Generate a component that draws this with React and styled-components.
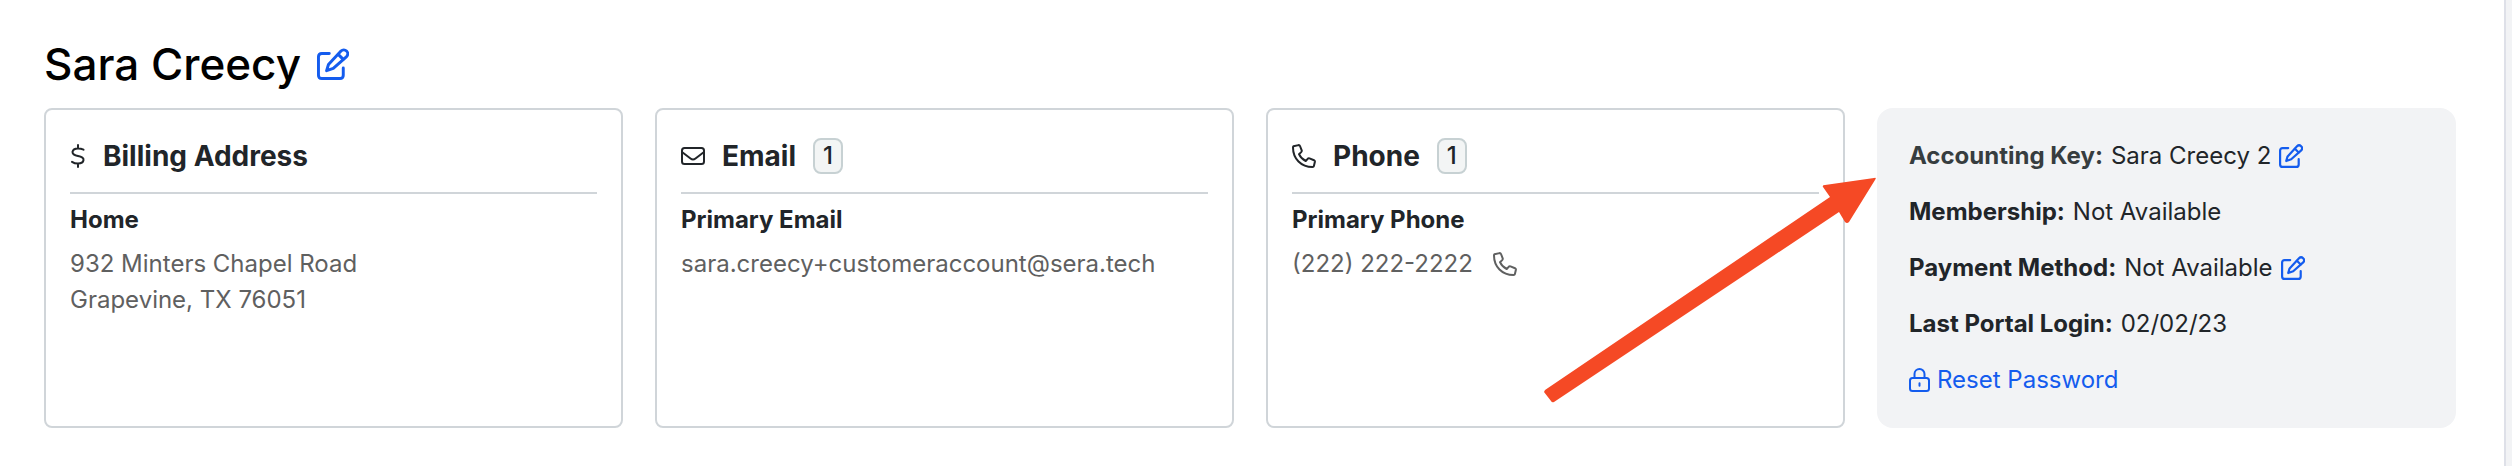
import React from "react";
import styled, { createGlobalStyle } from "styled-components";

const GlobalStyle = createGlobalStyle`
  * {
    box-sizing: border-box;
  }
  body {
    margin: 0;
    background-color: #fff;
    color: #212529;
    font-family: Inter, "Liberation Sans", sans-serif;
    font-size: 24px;
    line-height: 36px;
  }
  h1, h2, h3, p {
    margin: 0;
  }
`;

const PageStyle = styled.div`
  display: flex;
  min-height: 100vh;
`;

const Main = styled.main`
  flex: 1;
  padding: 36px 48px 38px 44px;
`;

const SideRail = styled.div`
  width: 8px;
  border-left: 2px solid #dee0e8;
  background-color: #f2f3f5;
`;

const TitleRow = styled.div`
  display: flex;
  align-items: center;
  gap: 16px;
  margin-bottom: 16px;
`;

const Title = styled.h1`
  color: #000;
  font-size: 44px;
  font-weight: 500;
  line-height: 56px;
`;

const IconButton = styled.button`
  display: inline-flex;
  padding: 0;
  border: 0;
  background: none;
  color: #145cee;
  cursor: pointer;
`;

const CardGrid = styled.div`
  display: grid;
  grid-template-columns: repeat(4, minmax(0, 1fr));
  gap: 32px;
`;

const Card = styled.section`
  position: relative;
  min-height: 320px;
  padding: 24px;
  border: 2px solid #d0d5d9;
  border-radius: 8px;
`;

const CardHeader = styled.header`
  display: flex;
  align-items: center;
  gap: 17px;
  height: 60px;
  margin-bottom: 8px;
  padding-bottom: 14px;
  border-bottom: 2px solid #d0d5d9;
`;

const CardTitle = styled.h2`
  font-size: 28px;
  font-weight: 700;
`;

const Count = styled.span`
  padding: 0 8px;
  border: 2px solid #c7d1d3;
  border-radius: 8px;
  background-color: #f3f5f5;
  font-weight: 500;
  line-height: 32px;
`;

const Label = styled.h3`
  margin-bottom: 8px;
  font-size: 24px;
  font-weight: 700;
`;

const Value = styled.p`
  display: flex;
  align-items: center;
  gap: 20px;
  color: #5f6060;
`;

const Summary = styled.section`
  display: flex;
  flex-direction: column;
  gap: 20px;
  padding: 30px 32px;
  border-radius: 16px;
  background-color: #f2f3f5;
`;

const SummaryRow = styled.p`
  display: flex;
  align-items: center;
  gap: 8px;
`;

const SummaryLabel = styled.strong`
  color: ${({ $muted }) => ($muted ? "#373d3f" : "#212529")};
  font-weight: 700;
`;

const ResetLink = styled.a`
  display: inline-flex;
  align-items: center;
  gap: 6px;
  color: #145cee;
  text-decoration: none;
`;

const Arrow = styled.svg`
  position: absolute;
  right: -34px;
  bottom: 22px;
  width: 334px;
  height: 228px;
  pointer-events: none;
`;

function EditIcon({ size }) {
  return (
    <svg
      width={size}
      height={size}
      viewBox='0 0 24 24'
      fill='none'
      stroke='currentColor'
      strokeWidth='2.2'
      strokeLinecap='round'
      strokeLinejoin='round'
    >
      <path d='M9.200 4.100H3.600Q1.100 4.100 1.100 6.600V20.400Q1.100 22.900 3.600 22.900H17.200Q19.700 22.900 19.700 20.400V15' />
      <path d='M7.200 17L8.600 12.400L18 2.300A2.900 2.900 0 0 1 22.200 6.400L12.200 15.300Z' />
      <path d='M15.900 4.800L19.700 8.500' />
    </svg>
  );
}

function PhoneIcon() {
  return (
    <svg width='24' height='24' viewBox='0 0 24 24' fill='none' stroke='currentColor' strokeWidth='2' strokeLinejoin='round'>
      <path d='M1.500 2.300L6.500 1.100Q7.600 1 8 2L9.700 6.300Q10 7.300 9.200 8.100L7 10.200Q9 14.800 13.700 17L15.700 14.800Q16.500 14 17.500 14.400L22 16.200Q23.100 16.700 22.900 17.800L21.900 22Q21.700 23 20.500 23Q12 23 6.500 17.500Q1 12 1 3.500Q1 2.500 1.500 2.300Z' />
    </svg>
  );
}

function DollarIcon() {
  return (
    <svg width='16' height='24' viewBox='0 0 16 24' fill='none' stroke='currentColor' strokeWidth='2' strokeLinecap='round'>
      <path d='M8 1V4.500M8 19.500V23M13.500 5.700Q11 4.500 8 4.500Q3 4.500 2.500 8Q2.500 11 8 12Q14 13 13.500 16Q13 19.500 8 19.500Q4.500 19.500 2 17.800' />
    </svg>
  );
}

function MailIcon() {
  return (
    <svg width='24' height='24' viewBox='0 0 24 24' fill='none' stroke='currentColor' strokeWidth='2' strokeLinejoin='round'>
      <rect x='1' y='4' width='22' height='16' rx='2.500' />
      <path d='M1 8L9.500 14.500Q12 16.500 14.500 14.500L23 8' />
    </svg>
  );
}

function LockIcon() {
  return (
    <svg width='22' height='24' viewBox='0 0 22 24' fill='none' stroke='currentColor' strokeWidth='2' strokeLinecap='round'>
      <rect x='1' y='10' width='19' height='13' rx='2.500' />
      <path d='M5.500 10V6A5 5 0 0 1 15.500 6V10M10.500 15.300V17.700' />
    </svg>
  );
}

function ContactCard({ icon, title, count, label, children }) {
  return (
    <Card>
      <CardHeader>
        {icon}
        <CardTitle>{title}</CardTitle>
        {count && <Count>{count}</Count>}
      </CardHeader>
      <Label>{label}</Label>
      {children}
    </Card>
  );
}

export default function App() {
  return (
    <PageStyle>
      <GlobalStyle />
      <Main>
        <TitleRow>
          <Title>Sara Creecy</Title>
          <IconButton aria-label='Edit name'>
            <EditIcon size={32} />
          </IconButton>
        </TitleRow>
        <CardGrid>
          <ContactCard icon={<DollarIcon />} title='Billing Address' label='Home'>
            <Value>932 Minters Chapel Road</Value>
            <Value>Grapevine, TX 76051</Value>
          </ContactCard>
          <ContactCard icon={<MailIcon />} title='Email' count={1} label='Primary Email'>
            <Value>sara.creecy+customeraccount@sera.tech</Value>
          </ContactCard>
          <ContactCard icon={<PhoneIcon />} title='Phone' count={1} label='Primary Phone'>
            <Value>
              (222) 222-2222 <PhoneIcon />
            </Value>
            <Arrow viewBox='0 0 334 228'>
              <path
                d='M2 214L287 21L280 11Q279 9 282 9L331 2Q334 1 332 4L306 46Q304 48 302 46L296 36L11 226Q9 227 8 225L1 216Z'
                fill='#f54925'
              />
            </Arrow>
          </ContactCard>
          <Summary>
            <SummaryRow>
              <SummaryLabel $muted>Accounting Key:</SummaryLabel>
              Sara Creecy 2
              <IconButton aria-label='Edit accounting key'>
                <EditIcon size={24} />
              </IconButton>
            </SummaryRow>
            <SummaryRow>
              <SummaryLabel>Membership:</SummaryLabel>
              Not Available
            </SummaryRow>
            <SummaryRow>
              <SummaryLabel>Payment Method:</SummaryLabel>
              Not Available
              <IconButton aria-label='Edit payment method'>
                <EditIcon size={24} />
              </IconButton>
            </SummaryRow>
            <SummaryRow>
              <SummaryLabel>Last Portal Login:</SummaryLabel>
              02/02/23
            </SummaryRow>
            <SummaryRow>
              <ResetLink href='#reset-password'>
                <LockIcon />
                Reset Password
              </ResetLink>
            </SummaryRow>
          </Summary>
        </CardGrid>
      </Main>
      <SideRail />
    </PageStyle>
  );
}
